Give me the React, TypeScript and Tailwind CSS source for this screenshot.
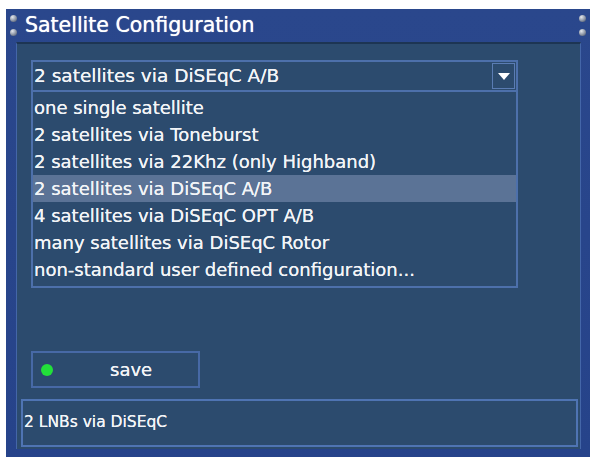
import React from "react";

const options = [
  "one single satellite",
  "2 satellites via Toneburst",
  "2 satellites via 22Khz (only Highband)",
  "2 satellites via DiSEqC A/B",
  "4 satellites via DiSEqC OPT A/B",
  "many satellites via DiSEqC Rotor",
  "non-standard user defined configuration...",
];

const selected = 3;

function Rivet() {
  return (
    <div className="w-[7px] h-[7px] rounded-full bg-[radial-gradient(circle_at_35%_30%,#e4e8ee,#8a93a3_55%,#3b4660)]" />
  );
}

export default function App() {
  return (
    <div className="w-[598px] h-[460px] bg-white pt-[9px] pl-[6px] pr-[8px] pb-[3px] font-['DejaVu_Sans',sans-serif] text-[#f2f4f7] [text-shadow:0_0_0.4px_#fff]">
      <div className="h-full flex flex-col bg-[#27448a] bg-[linear-gradient(180deg,#2a478c,#26438a)]">
        {/* Title bar */}
        <div className="h-[33px] flex items-center">
          <div className="w-[14px] flex flex-col items-center gap-[7px] pl-[1px]">
            <Rivet />
            <Rivet />
          </div>
          <span className="ml-[5px] text-[20.5px] leading-none [text-shadow:0_0_0.8px_#fff] text-white">
            Satellite Configuration
          </span>
          <div className="flex-1" />
          <div className="w-[14px] flex flex-col items-center gap-[7px] pr-[1px]">
            <Rivet />
            <Rivet />
          </div>
        </div>

        {/* Body */}
        <div className="flex-1 ml-[10px] mr-[9px] mb-[8px] flex flex-col bg-[#2c4b6e] border-t-2 border-t-[#1d3553] border-x border-x-[#4466a8] pt-[16px] pb-[2px]">
          {/* Select */}
          <div className="ml-[14px] w-[487px] h-[32px] border-2 border-[#4d70ab] flex items-center">
            <span className="pl-[1px] text-[18.5px] leading-none">2 satellites via DiSEqC A/B</span>
            <div className="flex-1" />
            <div className="mr-[1px] w-[23px] h-[26px] border border-[#5a7cb3] flex items-center justify-center">
              <div className="w-0 h-0 border-l-[6px] border-r-[6px] border-t-[7px] border-l-transparent border-r-transparent border-t-white" />
            </div>
          </div>

          {/* List */}
          <div className="ml-[14px] w-[487px] h-[196px] border-2 border-t-0 border-[#4d70ab] pt-[2px] flex flex-col">
            {options.map((opt, i) => (
              <div
                key={opt}
                className={
                  "h-[27px] flex items-center text-[18px] leading-none pl-[1px] " +
                  (i === selected ? "bg-[#5b7396]" : "")
                }
              >
                {opt}
              </div>
            ))}
          </div>

          {/* Save button */}
          <div className="mt-[63px] ml-[14px] w-[169px] h-[37px] border-2 border-[#4769a6] flex items-center pl-[8px]">
            <div className="w-[12px] h-[12px] rounded-full bg-[#22e03a]" />
            <span className="ml-[57px] text-[18px] leading-none">save</span>
          </div>

          {/* Status */}
          <div className="mt-[11px] ml-[4px] mr-[2px] h-[48px] border-2 border-[#4f74b3] flex items-center">
            <span className="pl-[1px] text-[15.5px] leading-none">2 LNBs via DiSEqC</span>
          </div>
        </div>
      </div>
    </div>
  );
}
